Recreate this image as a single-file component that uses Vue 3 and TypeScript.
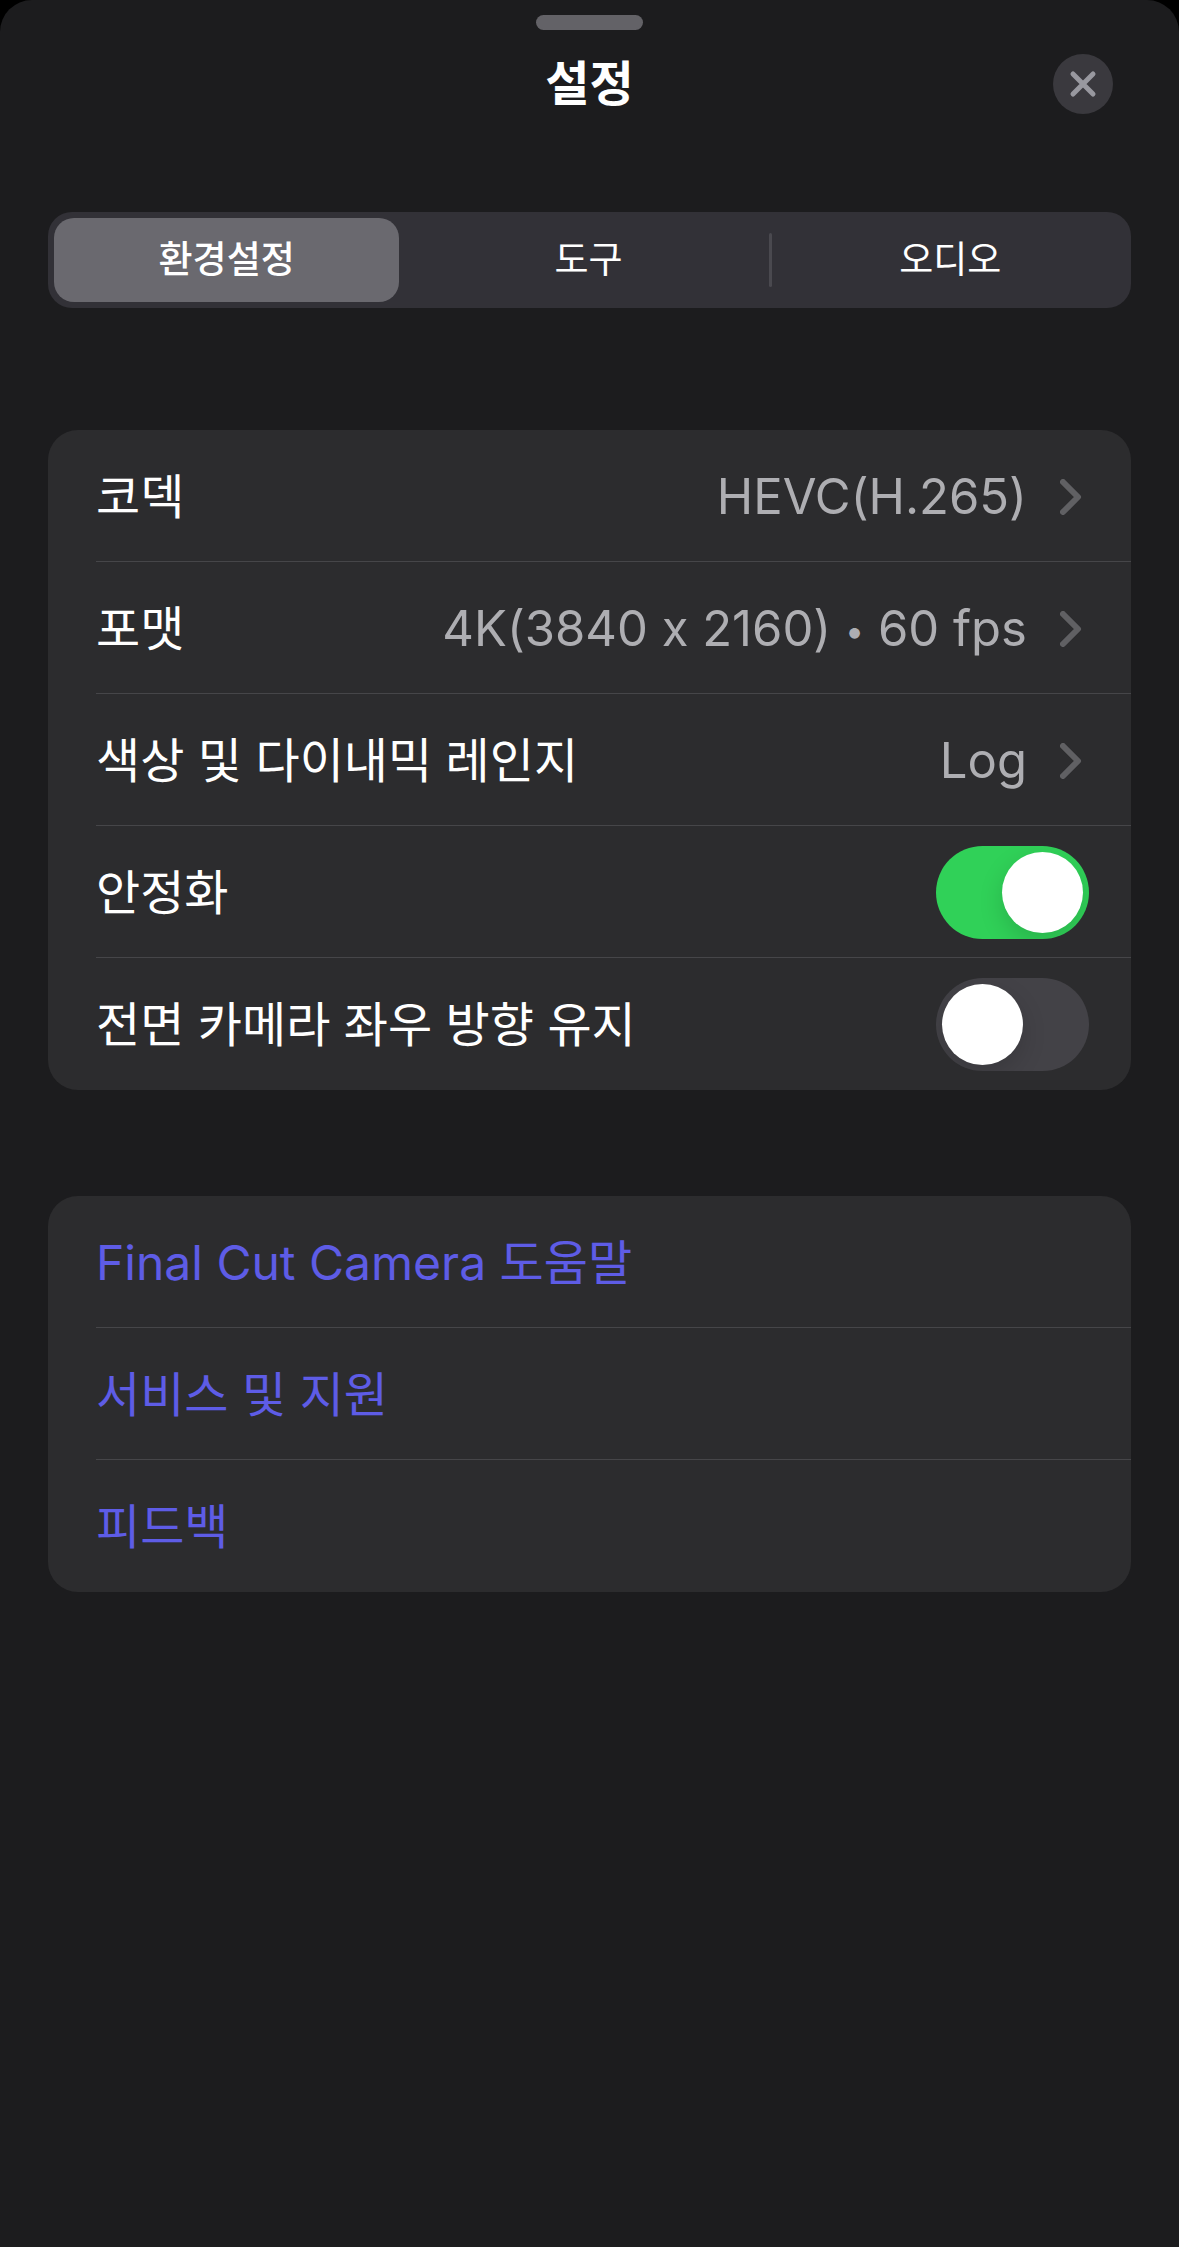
<script setup lang="ts">
import { ref } from 'vue'

interface ValueRow {
  label: string
  parts: string[]
}
interface HelpLink {
  text: string
}

const tabs: string[] = ['환경설정', '도구', '오디오']
const activeTab = ref(0)

const valueRows: ValueRow[] = [
  { label: '코덱', parts: ['HEVC(H.265)'] },
  { label: '포맷', parts: ['4K(3840 x 2160)', '60 fps'] },
  { label: '색상 및 다이내믹 레인지', parts: ['Log'] },
]

const toggles = ref([
  { id: 'stabilization', label: '안정화', on: true },
  { id: 'mirror-front', label: '전면 카메라 좌우 방향 유지', on: false },
])

const links: HelpLink[] = [
  { text: 'Final Cut Camera 도움말' },
  { text: '서비스 및 지원' },
  { text: '피드백' },
]
</script>

<template>
  <main class="sheet">
    <div class="grabber"></div>
    <header class="header">
      <h1 class="title">설정</h1>
      <button class="close" type="button" aria-label="닫기">
        <svg viewBox="0 0 60 60" aria-hidden="true">
          <path d="M20 20L40 40M40 20L20 40" />
        </svg>
      </button>
    </header>

    <div class="segments" role="tablist">
      <button
        v-for="(tab, i) in tabs"
        :key="tab"
        type="button"
        role="tab"
        class="segment"
        :class="{ active: i === activeTab, divided: i > 0 && i !== activeTab && i - 1 !== activeTab }"
        :aria-selected="i === activeTab"
        @click="activeTab = i"
      >
        <span class="pill">{{ tab }}</span>
      </button>
    </div>

    <section class="card">
      <button v-for="row in valueRows" :key="row.label" type="button" class="row">
        <span class="line">
          <span class="label">{{ row.label }}</span>
          <span class="value"><template v-for="(part, i) in row.parts" :key="part"><template v-if="i > 0">{{ ' ' }}<span class="bullet">•</span>{{ ' ' }}</template>{{ part }}</template></span>
          <svg class="chevron" viewBox="0 0 22 36" aria-hidden="true">
            <path d="M3 3L18 18L3 33" />
          </svg>
        </span>
      </button>
      <div v-for="item in toggles" :key="item.id" class="row">
        <div class="line">
          <label class="label" :for="item.id">{{ item.label }}</label>
          <input :id="item.id" v-model="item.on" class="switch" type="checkbox" role="switch" />
        </div>
      </div>
    </section>

    <section class="card">
      <a v-for="link in links" :key="link.text" href="#" class="row link">
        <span class="line">
          <span class="label">{{ link.text }}</span>
        </span>
      </a>
    </section>
  </main>
</template>

<style>
body {
  margin: 0;
  background: #000;
}
</style>

<style scoped>
.sheet {
  box-sizing: border-box;
  min-height: 100vh;
  padding: 15px 48px 48px;
  border-radius: 32px 32px 0 0;
  background: #1c1c1e;
  color: #fff;
  font-family: Inter, 'Noto Sans CJK KR', sans-serif;
  font-size: 48px;
  line-height: 60px;
  font-feature-settings: 'calt' 0;
}
button {
  margin: 0;
  padding: 0;
  border: 0;
  background: none;
  color: inherit;
  font: inherit;
  font-feature-settings: inherit;
  cursor: pointer;
}
.grabber {
  width: 107px;
  height: 15px;
  margin: 0 auto;
  border-radius: 8px;
  background: #636267;
}
.header {
  display: grid;
  grid-template-columns: 60px 1fr 60px;
  align-items: center;
  height: 60px;
  margin: 24px 18px 98px;
}
.title {
  grid-column: 2;
  margin: 0;
  font-size: 48px;
  font-weight: 600;
  text-align: center;
}
.close {
  width: 60px;
  height: 60px;
  border-radius: 50%;
  background: #3a393e;
}
.close svg {
  display: block;
  fill: none;
  stroke: #98989f;
  stroke-width: 5;
  stroke-linecap: round;
}
.segments {
  display: grid;
  grid-template-columns: repeat(3, 1fr);
  height: 96px;
  margin-bottom: 122px;
  padding-right: 2px;
  box-sizing: border-box;
  border-radius: 24px;
  background: #323137;
  font-size: 37px;
}
.segment {
  display: flex;
  align-items: center;
}
.pill {
  flex: 1;
  line-height: 84px;
}
.active .pill {
  margin: 0 9px 0 6px;
  border-radius: 20px;
  background: #6a696f;
  font-weight: 500;
}
.divided::before {
  content: '';
  width: 3px;
  height: 54px;
  border-radius: 2px;
  background: #4a494f;
}
.card {
  margin-bottom: 106px;
  overflow: hidden;
  border-radius: 30px;
  background: #2c2c2e;
}
.row {
  display: block;
  box-sizing: border-box;
  width: 100%;
  padding-left: 48px;
  text-align: left;
  text-decoration: none;
}
.line {
  display: flex;
  align-items: center;
  box-sizing: border-box;
  height: 132px;
  padding-top: 2px;
  padding-right: 42px;
  border-bottom: 1px solid #464649;
}
.row:last-child .line {
  border-bottom-color: transparent;
}
.label {
  flex: 1;
  white-space: nowrap;
}
.value {
  color: #aeaeb2;
  font-size: 49px;
  line-height: 62px;
  white-space: pre;
}
.bullet {
  font-size: 34px;
  line-height: 1;
  vertical-align: 3px;
}
.chevron {
  width: 22px;
  height: 36px;
  margin-left: 33px;
  margin-right: 7px;
  fill: none;
  stroke: #606063;
  stroke-width: 6;
  stroke-linecap: round;
  stroke-linejoin: round;
}
.switch {
  appearance: none;
  display: flex;
  box-sizing: border-box;
  width: 153px;
  height: 93px;
  margin: 0;
  padding: 6px;
  border-radius: 47px;
  background: #434247;
  overflow: hidden;
  cursor: pointer;
}
.switch::before {
  content: '';
  width: 81px;
  height: 81px;
  border-radius: 50%;
  background: #fff;
  box-shadow: 0 9px 24px rgba(0, 0, 0, 0.15);
}
.switch:checked {
  justify-content: flex-end;
  background: #30d158;
}
.link {
  color: #5e5ce6;
}
</style>
